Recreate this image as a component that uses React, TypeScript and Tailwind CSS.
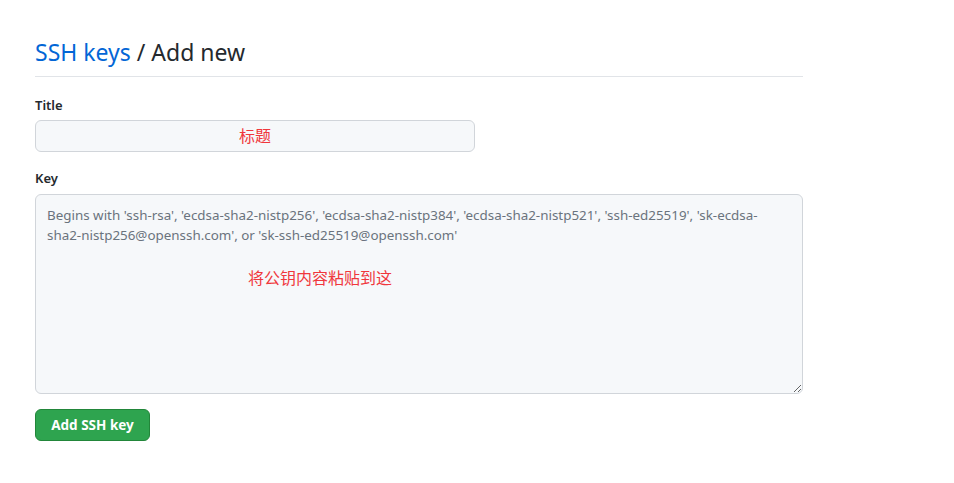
import React from "react";

export default function App() {
  const font = { fontFamily: '"Noto Sans", "Noto Sans CJK SC", sans-serif' };
  return (
    <div className="min-h-[483px] w-[954px] bg-white" style={font}>
      <div className="ml-[35px] w-[768px] pt-[36px]">
        <h2 className="border-b border-[#e1e4e8] pb-[8px] text-[23px] font-normal leading-[32px] text-[#24292e]">
          <a className="text-[#0366d6]">SSH keys</a> / Add new
        </h2>
        <div className="mt-[18px]">
          <label className="block text-[13px] font-semibold leading-[20px] text-[#24292e]">Title</label>
          <div className="mt-[5px] flex h-[32px] w-[440px] items-center justify-center rounded-md border border-[#d1d5da] bg-[#f6f8fa] text-[16px] text-[#f0373c]">
            标题
          </div>
        </div>
        <div className="mt-[16px]">
          <label className="block text-[13px] font-semibold leading-[20px] text-[#24292e]">Key</label>
          <div className="relative mt-[6px]">
            <textarea
              className="block h-[200px] w-[768px] resize-y rounded-md border border-[#d1d5da] bg-[#f6f8fa] px-[11px] py-[10px] text-[13.4px] leading-[20px] text-[#24292e] placeholder:text-[#6a737d] outline-none"
              style={font}
              placeholder="Begins with 'ssh-rsa', 'ecdsa-sha2-nistp256', 'ecdsa-sha2-nistp384', 'ecdsa-sha2-nistp521', 'ssh-ed25519', 'sk-ecdsa-sha2-nistp256@openssh.com', or 'sk-ssh-ed25519@openssh.com'"
            />
            <span className="pointer-events-none absolute left-[213px] top-[72px] text-[16px] leading-[24px] text-[#f0373c]">
              将公钥内容粘贴到这
            </span>
          </div>
        </div>
        <button className="mt-[15px] h-[32px] w-[115px] rounded-md border border-[#22863a] bg-[#2ea44f] text-[13.5px] font-bold text-white">
          Add SSH key
        </button>
      </div>
    </div>
  );
}
